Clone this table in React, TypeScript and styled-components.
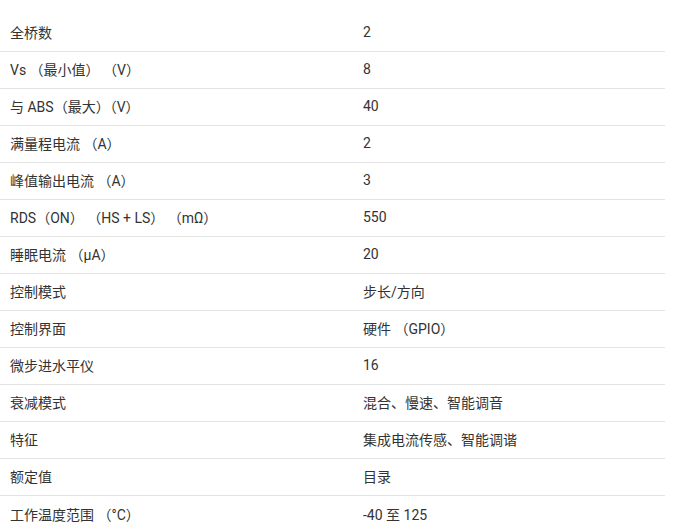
import * as React from 'react'
import styled, { createGlobalStyle } from 'styled-components'

const ROW_HEIGHT = 37
const TABLE_WIDTH = 665
const LABEL_WIDTH = 353

const rows: [string, string][] = [
  ['全桥数', '2'],
  ['Vs （最小值） （V）', '8'],
  ['与 ABS（最大）（V）', '40'],
  ['满量程电流 （A）', '2'],
  ['峰值输出电流 （A）', '3'],
  ['RDS（ON） （HS + LS） （mΩ）', '550'],
  ['睡眠电流 （μA）', '20'],
  ['控制模式', '步长/方向'],
  ['控制界面', '硬件 （GPIO）'],
  ['微步进水平仪', '16'],
  ['衰减模式', '混合、慢速、智能调音'],
  ['特征', '集成电流传感、智能调谐'],
  ['额定值', '目录'],
  ['工作温度范围 （°C）', '-40 至 125']
]

const GlobalStyle = createGlobalStyle`
  body {
    margin: 0;
    background: #fff;
  }
`

export default function App () {
  return (
    <Page>
      <GlobalStyle />
      <Table>
        {rows.map(([label, value], i) => (
          <Row key={label} last={i === rows.length - 1}>
            <Label>{label}</Label>
            <Value>{value}</Value>
          </Row>
        ))}
      </Table>
    </Page>
  )
}

const Page = styled.div`
  font-family: Roboto, "Noto Sans CJK SC", sans-serif;
  font-size: 14px;
  color: #333;
  padding-top: 15px;
  height: 532px;
  overflow: hidden;
  box-sizing: border-box;
`

const Table = styled.div`
  width: ${TABLE_WIDTH}px;
  display: flex;
  flex-direction: column;
`

const Row = styled.div<{ last?: boolean }>`
  display: grid;
  grid-template-columns: ${LABEL_WIDTH}px 1fr;
  align-items: center;
  height: ${ROW_HEIGHT}px;
  padding-bottom: 2px;
  box-sizing: border-box;
  border-bottom: ${p => (p.last ? 'none' : '1px solid #e3e3e3')};
`

const Label = styled.div`
  padding-left: 10px;
  white-space: pre;
`

const Value = styled.div`
  padding-left: 10px;
  white-space: pre;
`
